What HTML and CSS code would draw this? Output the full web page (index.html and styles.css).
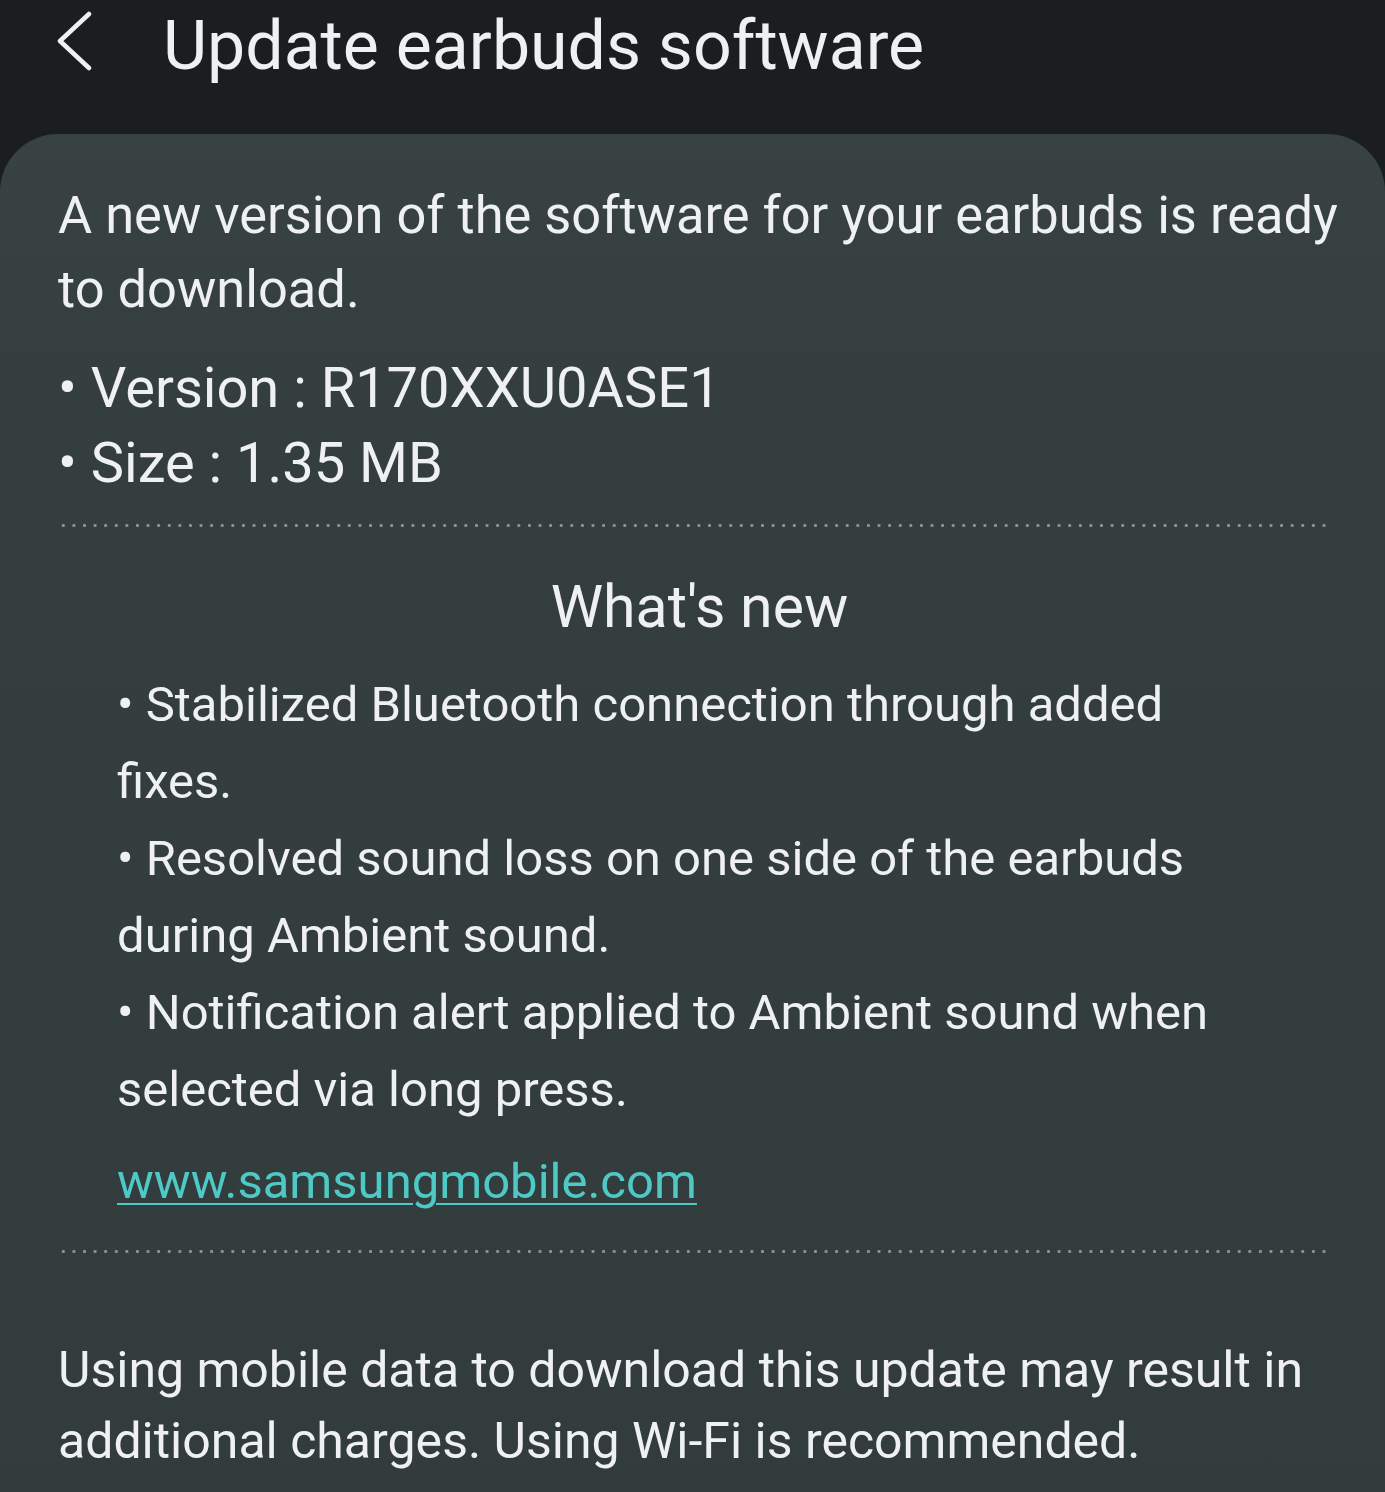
FILE: index.html
```html
<!DOCTYPE html>
<html lang="en">
<head>
<meta charset="utf-8">
<title>Update earbuds software</title>
<link rel="stylesheet" href="styles.css">
</head>
<body>
<div class="screen">
  <header class="appbar">
    <svg class="back" width="40" height="60" viewBox="0 0 40 60" aria-hidden="true">
      <polyline points="32,3 3,30 32,57" fill="none" stroke="#eef0f2" stroke-width="4.5" stroke-linecap="round" stroke-linejoin="round"/>
    </svg>
    <h1 class="title">Update earbuds software</h1>
  </header>
  <main class="card">
    <p class="intro">A new version of the software for your earbuds is ready to download.</p>
    <ul class="meta">
      <li>• Version : R170XXU0ASE1</li>
      <li>• Size : 1.35 MB</li>
    </ul>
    <div class="dots"></div>
    <h2 class="whatsnew">What's new</h2>
    <div class="notes">
      <p>• Stabilized Bluetooth connection through added fixes.</p>
      <p>• Resolved sound loss on one side of the earbuds during Ambient sound.</p>
      <p>• Notification alert applied to Ambient sound when selected via long press.</p>
      <a class="link" href="#">www.samsungmobile.com</a>
    </div>
    <div class="dots dots-2"></div>
    <p class="warning">Using mobile data to download this update may result in additional charges. Using Wi-Fi is recommended.</p>
  </main>
</div>
</body>
</html>
```
FILE: styles.css
```css
html, body {
  margin: 0;
  padding: 0;
  background: #1a1e21;
}
.screen {
  width: 1385px;
  height: 1492px;
  overflow: hidden;
  font-family: Roboto, "Noto Sans", "Liberation Sans", sans-serif;
  color: #eef0f2;
}
.appbar {
  height: 134px;
  display: flex;
  align-items: flex-start;
  box-sizing: border-box;
}
.back {
  margin: 11px 0 0 57px;
  flex: none;
}
.title {
  margin: 0 0 0 66px;
  font-size: 68px;
  font-weight: 400;
  line-height: 92px;
  letter-spacing: 0;
}
.card {
  background: linear-gradient(180deg, #384243 0%, #343e3f 20%, #323c3c 100%);
  border-radius: 58px 58px 0 0;
  padding: 44px 40px 60px 58px;
  min-height: 1400px;
  box-sizing: border-box;
}
.intro {
  margin: 0;
  font-size: 52.4px;
  line-height: 74px;
}
.meta {
  list-style: none;
  margin: 25px 0 0 0;
  padding: 0;
  font-size: 56px;
  line-height: 75px;
}
.dots {
  height: 3px;
  margin: 23px 0 0 0;
  background-image: radial-gradient(circle, #8d9696 1.3px, transparent 1.7px);
  background-size: 10.6px 3px;
  background-repeat: repeat-x;
  width: 1272px;
}
.whatsnew {
  margin: 45px 0 0 0;
  text-align: center;
  font-size: 59px;
  font-weight: 400;
  line-height: 70px;
  padding-right: 4px;
}
.notes {
  margin: 24px 0 0 0;
  padding: 0 100px 0 59px;
  font-size: 49px;
  line-height: 77px;
}
.notes p {
  margin: 0;
}
.link {
  display: inline-block;
  margin-top: 15px;
  color: #4fc9c5;
  text-decoration: underline;
  text-decoration-thickness: 2px;
  text-underline-offset: 5px;
}
.dots-2 {
  margin-top: 30px;
}
.warning {
  margin: 82px 0 0 0;
  font-size: 50px;
  line-height: 71px;
}
```
